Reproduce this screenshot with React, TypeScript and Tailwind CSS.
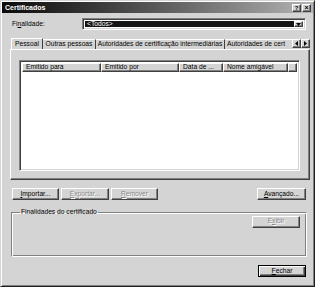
import React from 'react';

const raised =
  'border border-t-white border-l-white border-r-[#404040] border-b-[#404040] shadow-[inset_-1px_-1px_0_#808080]';
const sunken =
  'border border-t-[#808080] border-l-[#808080] border-r-white border-b-white shadow-[inset_1px_1px_0_#404040,inset_-1px_-1px_0_#d4d4d4]';

function Mn({ children }: { children: React.ReactNode }) {
  return <span className="underline underline-offset-[1px]">{children}</span>;
}

function Button({
  children,
  width,
  disabled,
  isDefault,
}: {
  children: React.ReactNode;
  width: string;
  disabled?: boolean;
  isDefault?: boolean;
}) {
  const frame = isDefault
    ? 'border border-black shadow-[inset_1px_1px_0_#fff,inset_-1px_-1px_0_#404040,inset_-2px_-2px_0_#808080]'
    : raised;
  return (
    <div
      className={`${width} h-[12px] ${frame} bg-[#d4d4d4] flex items-center justify-center ${
        disabled ? 'text-[#8a8a8a] [text-shadow:1px_1px_0_#fff]' : 'text-black'
      }`}
    >
      {children}
    </div>
  );
}

const columns = [
  { label: 'Emitido para', w: 'w-[79px]' },
  { label: 'Emitido por', w: 'w-[78px]' },
  { label: 'Data de ...', w: 'w-[44px]' },
  { label: 'Nome amigável', w: 'w-[65px]' },
  { label: '', w: 'flex-1' },
];

export default function App() {
  return (
    <div className="w-[320px] h-[289px] bg-white overflow-hidden antialiased font-['Liberation_Sans',Arial,sans-serif] text-[6.7px] leading-none text-black">
      <div className="w-[315px] h-[287px] bg-[#d4d4d4] border border-t-[#d4d4d4] border-l-[#d4d4d4] border-r-[#202020] border-b-[#202020] shadow-[inset_1px_1px_0_#fff,inset_-1px_-1px_0_#808080] p-[1px] flex flex-col">
        {/* title bar */}
        <div className="h-[11px] bg-gradient-to-r from-[#0c0c0c] via-[#5a5a5a] to-[#b4b4b4] flex items-center justify-between pl-[3px] pr-[2px]">
          <span className="text-white font-bold text-[7px]">Certificados</span>
          <div className="flex gap-[1px]">
            <div className={`w-[9px] h-[8px] ${raised} bg-[#d4d4d4] flex items-center justify-center text-[6px] font-bold`}>?</div>
            <div className={`w-[9px] h-[8px] ${raised} bg-[#d4d4d4] flex items-center justify-center text-[7px] font-bold`}>×</div>
          </div>
        </div>

        {/* finalidade */}
        <div className="flex items-center mt-[5px] pl-[10px] pr-[7px] h-[12px]">
          <div className="w-[70px]">
            Fi<Mn>n</Mn>alidade:
          </div>
          <div className={`flex-1 h-[12px] ${sunken} bg-white flex p-[2px]`}>
            <div className="flex-1 bg-[#141414] text-white flex items-center pl-[2px]">&lt;Todos&gt;</div>
            <div className={`w-[9px] ${raised} bg-[#d4d4d4] flex items-center justify-center`}>
              <svg width="5" height="3" viewBox="0 0 5 3">
                <path d="M0 0h5L2.5 3z" fill="#000" />
              </svg>
            </div>
          </div>
        </div>

        {/* tabs */}
        <div className="ml-[8px] w-[300px] mt-[7px] flex items-end h-[12px] relative z-10">
          <div className="flex-1 flex items-end overflow-hidden h-[12px] pl-[1px]">
            <div className="shrink-0 w-[32px] h-[12px] border border-b-0 border-t-white border-l-white border-r-[#404040] bg-[#d4d4d4] flex items-center justify-center -mb-[1px] pb-[1px]">
              Pessoal
            </div>
            <div className="shrink-0 w-[53px] h-[10px] border border-b-0 border-t-white border-l-0 border-r-[#404040] flex items-center justify-center">
              Outras pessoas
            </div>
            <div className="shrink-0 w-[129px] h-[10px] border border-b-0 border-t-white border-l-0 border-r-[#404040] flex items-center justify-center">
              Autoridades de certificação intermediárias
            </div>
            <div className="shrink-0 w-[80px] h-[10px] border border-b-0 border-t-white border-l-0 border-r-[#404040] flex items-center pl-[2px] whitespace-nowrap">
              Autoridades de cert
            </div>
          </div>
          <div className="flex mb-[1px]">
            <div className={`w-[9px] h-[9px] ${raised} bg-[#d4d4d4] flex items-center justify-center`}>
              <svg width="3" height="5" viewBox="0 0 3 5">
                <path d="M3 0v5L0 2.5z" fill="#000" />
              </svg>
            </div>
            <div className={`w-[9px] h-[9px] ${raised} bg-[#d4d4d4] flex items-center justify-center`}>
              <svg width="3" height="5" viewBox="0 0 3 5">
                <path d="M0 0v5L3 2.5z" fill="#000" />
              </svg>
            </div>
          </div>
        </div>

        {/* tab panel */}
        <div className="ml-[8px] w-[300px] h-[131px] border border-t-white border-l-white border-r-[#404040] border-b-[#404040] shadow-[inset_-1px_-1px_0_#808080] pt-[10px] pl-[8px] pr-[9px] pb-[8px]">
          <div className={`h-full ${sunken} bg-white p-[2px] flex flex-col`}>
            <div className="flex h-[9px]">
              {columns.map((c, i) => (
                <div
                  key={i}
                  className={`${c.w} shrink-0 h-[9px] ${raised} bg-[#d4d4d4] flex items-center pl-[3px] whitespace-nowrap overflow-hidden`}
                >
                  {c.label}
                </div>
              ))}
            </div>
            <div className="flex-1 bg-white" />
          </div>
        </div>

        {/* buttons row */}
        <div className="flex items-center mt-[8px] pl-[10px] pr-[7px]">
          <div className="flex gap-[2px]">
            <Button width="w-[47px]">
              <span>
                <Mn>I</Mn>mportar...
              </span>
            </Button>
            <Button width="w-[48px]" disabled>
              <span>
                <Mn>E</Mn>xportar...
              </span>
            </Button>
            <Button width="w-[47px]" disabled>
              <span>
                <Mn>R</Mn>emover
              </span>
            </Button>
          </div>
          <div className="flex-1" />
          <Button width="w-[49px]">
            <span>
              <Mn>A</Mn>vançado...
            </span>
          </Button>
        </div>

        {/* group box */}
        <fieldset className="mt-[9px] ml-[9px] mr-[6px] h-[48px] border border-t-[#808080] border-l-[#808080] border-r-white border-b-white shadow-[inset_1px_1px_0_#fff,inset_-1px_-1px_0_#808080] px-[6px] pb-[9px] flex flex-col">
          <legend className="ml-[2px] px-[1px]">Finalidades do certificado</legend>
          <div className="flex-1" />
          <div className="flex justify-end">
            <Button width="w-[48px]" disabled>
              <span>E<Mn>x</Mn>ibir</span>
            </Button>
          </div>
        </fieldset>

        {/* footer */}
        <div className="flex justify-end mt-[8px] pr-[7px]">
          <Button width="w-[48px]" isDefault>
            <span>
              <Mn>F</Mn>echar
            </span>
          </Button>
        </div>
      </div>
    </div>
  );
}
